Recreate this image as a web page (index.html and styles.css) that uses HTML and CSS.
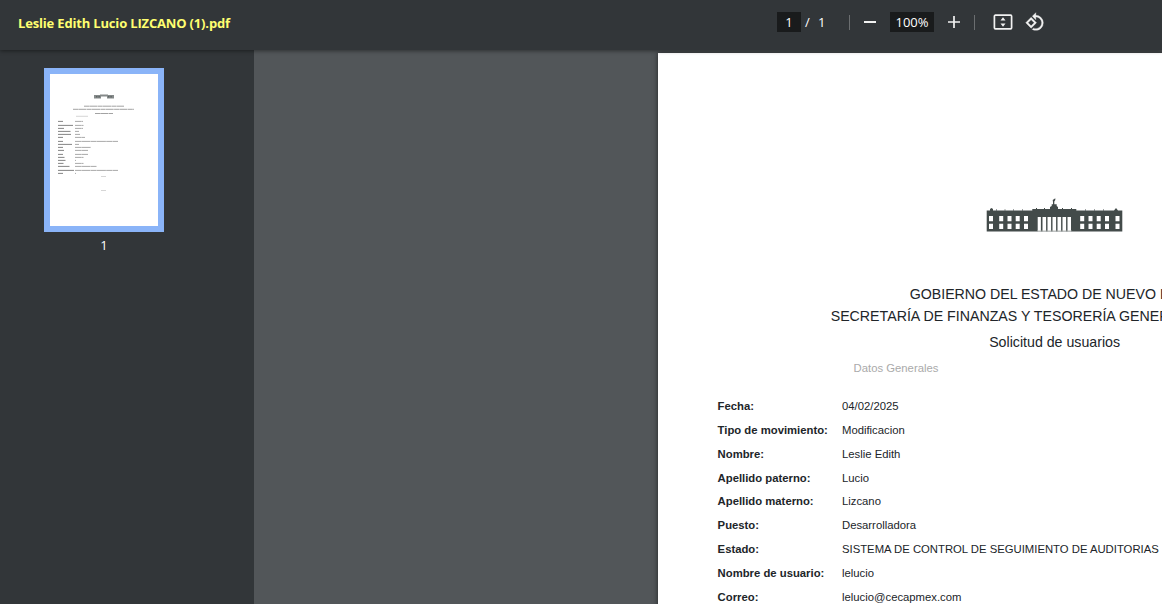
FILE: index.html
```html
<!DOCTYPE html>
<html lang="es">
<head>
<meta charset="utf-8">
<title>Leslie Edith Lucio LIZCANO (1).pdf</title>
<link rel="stylesheet" href="styles.css">
</head>
<body>
<div class="viewer">
  <header class="toolbar">
    <div class="file-name"><span>Leslie Edith Lucio LIZCANO (1).pdf</span></div>
    <div class="controls">
      <span class="field page-field">1</span>
      <span class="slash">/</span>
      <span class="total">1</span>
      <span class="divider"></span>
      <svg class="zoom-out" width="14" height="14" viewBox="0 0 14 14"><path d="M1 7H13" stroke="#f1f1f1" stroke-width="2"/></svg>
      <span class="field zoom-field">100%</span>
      <svg class="zoom-in" width="14" height="14" viewBox="0 0 14 14"><path d="M1 7H13M7 1V13" stroke="#f1f1f1" stroke-width="1.7"/></svg>
      <span class="divider second"></span>
      <svg class="fit" width="20" height="16" viewBox="0 0 20 16"><rect x="1.4" y="1.2" width="17.2" height="13.6" rx="1" fill="none" stroke="#f1f1f1" stroke-width="1.7"/><path d="M10 3.2L12.5 6.5H7.5ZM10 12.8L7.5 9.5H12.5Z" fill="#f1f1f1"/></svg>
      <svg class="rotate" width="24" height="24" viewBox="0 0 24 24"><path d="M7.34 6.41L.86 12.9l6.49 6.48 6.49-6.48-6.5-6.49zM3.69 12.9l3.66-3.66L11 12.9l-3.66 3.66-3.65-3.66zm15.67-6.26A8.95 8.95 0 0 0 13 4V.76L8.76 5 13 9.24V6c1.79 0 3.58.68 4.95 2.05a7.007 7.007 0 0 1 0 9.9 6.973 6.973 0 0 1-7.79 1.44l-1.49 1.49C10.02 21.62 11.51 22 13 22c2.3 0 4.61-.88 6.36-2.64a8.98 8.98 0 0 0 0-12.72z" fill="#f1f1f1" stroke="#f1f1f1" stroke-width=".4"/></svg>
    </div>
  </header>
  <div class="content">
    <aside class="sidebar">
      <div class="thumb">
        <svg width="108" height="152" viewBox="0 0 108 152">
          <path d="M44 21H50V20.5H58V21H64V24.5H57V22.5H51V24.5H44Z" fill="#858a8a"/>
          <path d="M46 22.8H50M58 22.8H62" stroke="#4e5554" stroke-dasharray="1 .6"/>
          <g stroke="#999" stroke-width=".9" stroke-dasharray="5 .3 8 .4">
            <path d="M34 32.2H74M23 35.3H84M45 39.5H63"/>
          </g>
          <path d="M26 42.3H38M51 102.5H56M51 116.5H56" stroke="#ccc" stroke-width=".8"/>
          <g stroke="#777" stroke-width=".9">
            <path d="M8 47.4H13M8 51.4H23M8 54.4H14M8 57.4H20.5M8 60.4H21M8 63.4H13M8 67.4H13M8 70.4H22M8 73.4H13M8 76.4H14M8 80.4H13M8 83.4H14.5M8 86.4H15.5M8 89.4H13.5M8 92.4H19.5M8 96.4H24M8 99.4H13"/>
          </g>
          <g stroke="#999" stroke-width=".85" stroke-dasharray="6 .3 9 .3">
            <path d="M25 47.4H33M25 51.4H33.5M25 54.4H33M25 57.4H29M25 60.4H30M25 63.4H35M25 67.4H68M25 70.4H29M25 73.4H41M25 76.4H38M25 80.4H38M25 83.4H33.5M25 86.4H26M25 89.4H33.5M25 92.4H46.5M25 96.4H68M25 99.4H26"/>
          </g>
        </svg>
      </div>
      <div class="thumb-label">1</div>
    </aside>
    <main class="canvas">
      <article class="page">
        <svg class="logo" width="138" height="36" viewBox="0 0 138 36">
          <g fill="#434b4a">
            <path d="M.7 14.5H4V13L5.500 12L7 13V14.500H46.300V13H64V11L65.700 10V8.300H67V6L66.700 4L69.300 2.300V4L68.300 5.500V8.300H70.700V10L72 11V13H90.300V14.500H128L130 12L132 14.500H136.300V35.500H.7Z"/>
            <path d="M10 13.500h1v1h-1zM18.500 13.500h1v1h-1zM27 13.500h1v1h-1zM36 13.500h1v1h-1zM50 12h1v1h-1zM58 12h1v1h-1zM76 12h1v1h-1zM85 12h1v1h-1zM99 13.500h1v1h-1zM108 13.500h1v1h-1zM117 13.500h1v1h-1z"/>
          </g>
          <g fill="none" stroke="#fff" stroke-width="4" stroke-dasharray="5.300 2.400">
            <path d="M5 20V33M15.200 20V33M23.500 20V33M31.700 20V33M40 20V33M96.200 20V33M104.500 20V33M112.700 20V33M121 20V33M131.500 20V33"/>
          </g>
          <path fill="#fff" d="M51.700 21h3.200v14.500h-3.200zM56.500 21h3.600v14.500h-3.600zM61.500 21h3.600v14.500h-3.600zM66.500 21h3.600v14.500h-3.600zM71.500 21h3.600v14.500h-3.600zM76.500 21h3.600v14.500h-3.600zM81.500 21h3.500v14.500h-3.500z"/>
          <path d="M51 35H86" stroke="#a3a8a7" stroke-width=".8"/>
        </svg>
        <h1 class="heading state">GOBIERNO DEL ESTADO DE NUEVO LEÓN</h1>
        <h2 class="heading office">SECRETARÍA DE FINANZAS Y TESORERÍA GENERAL DEL ESTADO</h2>
        <h3 class="heading form-name">Solicitud de usuarios</h3>
        <p class="section">Datos Generales</p>
        <dl class="data">
          <dt>Fecha:</dt><dd>04/02/2025</dd>
          <dt>Tipo de movimiento:</dt><dd>Modificacion</dd>
          <dt>Nombre:</dt><dd>Leslie Edith</dd>
          <dt>Apellido paterno:</dt><dd>Lucio</dd>
          <dt>Apellido materno:</dt><dd>Lizcano</dd>
          <dt>Puesto:</dt><dd>Desarrolladora</dd>
          <dt>Estado:</dt><dd>SISTEMA DE CONTROL DE SEGUIMIENTO DE AUDITORIAS</dd>
          <dt>Nombre de usuario:</dt><dd>lelucio</dd>
          <dt>Correo:</dt><dd>lelucio@cecapmex.com</dd>
        </dl>
      </article>
    </main>
  </div>
</div>
</body>
</html>
```
FILE: styles.css
```css
* { box-sizing: border-box; }
body { margin: 0; overflow: hidden; }
.viewer { display: flex; flex-direction: column; width: 1162px; height: 604px; overflow: hidden; background: #525659; }
.toolbar {
  position: relative; z-index: 1; display: flex; flex: none; height: 50px;
  background: #323639; color: #fff; font: 13px/20px "Open Sans", sans-serif;
  box-shadow: 0 1px 4px rgba(0, 0, 0, .45);
}
.file-name { width: 777px; padding: 13px 0 0 18px; color: #ffff70; font-weight: 700; letter-spacing: -.17px; white-space: nowrap; }
.controls { display: flex; align-items: center; height: 44px; }
.field { height: 20px; background: #191b1c; text-align: center; }
.page-field { width: 24px; }
.slash { margin-left: 4px; width: 6px; }
.total { margin-left: 7px; width: 8px; }
.divider { width: 1px; height: 15px; margin-left: 23px; background: #6b6e70; }
.zoom-out { margin-left: 13px; }
.zoom-field { width: 44px; margin-left: 13px; }
.zoom-in { margin-left: 13px; }
.divider.second { margin-left: 13px; }
.fit { margin-left: 18px; }
.rotate { width: 20px; height: 20px; margin-left: 12px; }
.content { display: flex; flex: 1; min-height: 0; }
.sidebar { flex: none; width: 254px; padding: 18px 0 0 44px; background: #323639; }
.thumb { width: 120px; height: 164px; border: 6px solid #8ab4f8; background: #fff; }
.thumb svg { display: block; }
.thumb-label { width: 120px; padding-top: 3px; color: #fff; font: 13px/20px "Open Sans", sans-serif; text-align: center; }
.canvas { flex: 1; min-width: 0; padding: 3px 0 0 404px; overflow: hidden; }
.page {
  width: 794px; height: 1123px; padding: 143px 60.4px 0 59.600px; background: #fff; color: #212529;
  font-family: "Liberation Sans", Arial, sans-serif; box-shadow: 0 0 5px rgba(0, 0, 0, .6);
}
.logo { display: block; margin: 0 auto 51px; }
.heading { margin: 0; font-size: 14.200px; font-weight: 400; line-height: 22px; text-align: center; white-space: nowrap; }
.state { letter-spacing: -.02px; padding-right: 1px; }
.form-name { margin-top: 4px; }
.section { margin: 6px 0 0 136px; color: #aaa; font-size: 11.300px; line-height: 18px; }
.data { display: grid; grid-template-columns: 124.400px 1fr; grid-auto-rows: 23.850px; align-items: center; margin: 17.200px 0 0; font-size: 11.300px; white-space: nowrap; }
.data dt { font-weight: 700; }
.data dd { margin: 0; }
```
